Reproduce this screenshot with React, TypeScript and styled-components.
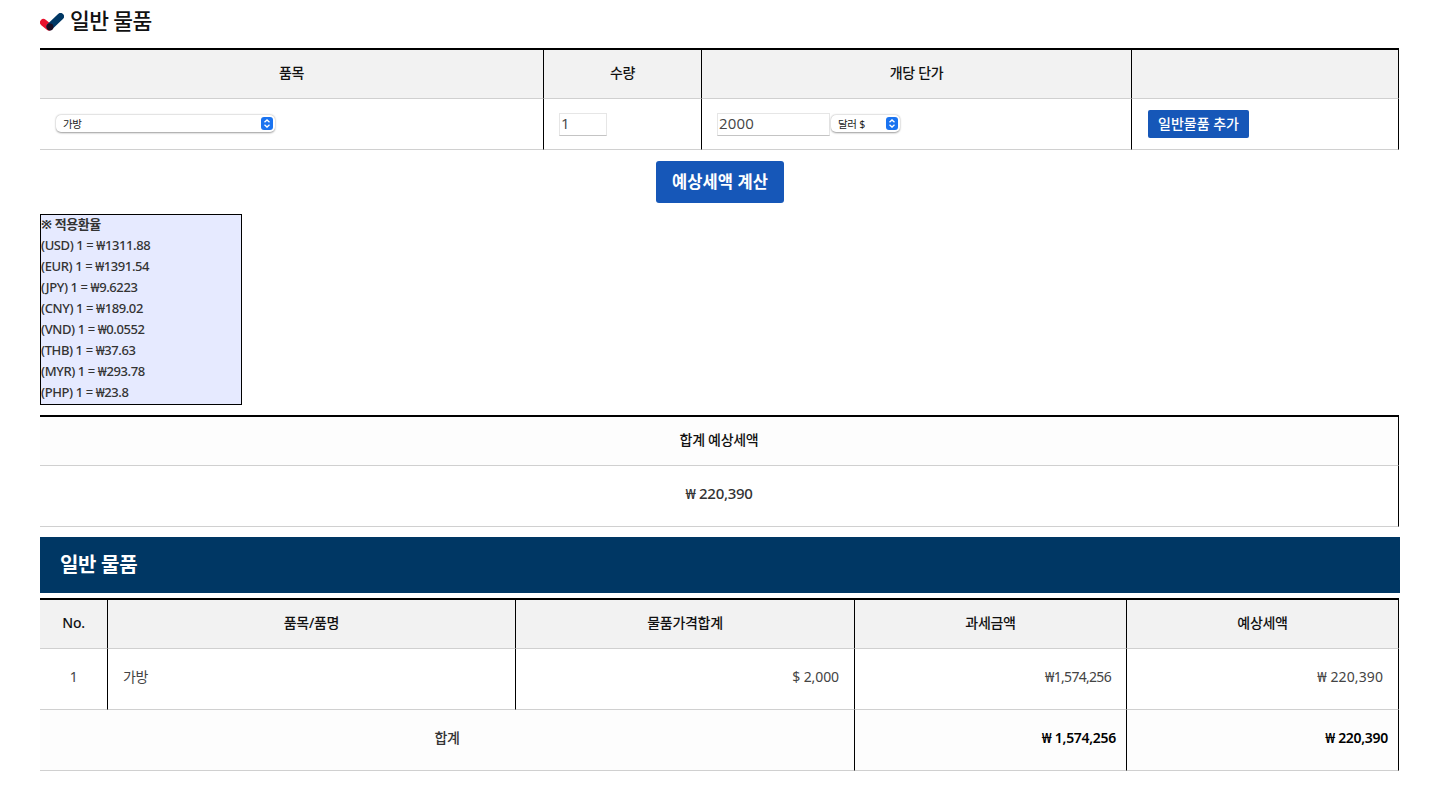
import React from "react";
import styled, { createGlobalStyle } from "styled-components";

const Global = createGlobalStyle`
  html, body { margin: 0; padding: 0; background: #fff; }
  body { font-family: "Noto Sans", "Noto Sans CJK KR", sans-serif; color: #333; letter-spacing: -0.3px; }
`;

const Page = styled.div`
  width: 1360px;
  margin: 0 40px;
  padding-bottom: 35px;
`;

const Heading = styled.h3`
  display: flex;
  align-items: center;
  gap: 6px;
  height: 48px;
  margin: 0;
  padding-bottom: 4px;
  box-sizing: border-box;
  font-size: 21.5px;
  line-height: 26px;
  font-weight: 500;
  color: #111;
  letter-spacing: -0.6px;
`;

const HeadingText = styled.span`
  padding-bottom: 3px;
`;

const Table = styled.table`
  width: 1359px;
  table-layout: fixed;
  border-collapse: separate;
  border-spacing: 0;
  border-top: 2px solid #000;
`;

const Th = styled.th<{ $tint?: boolean }>`
  height: 44px;
  padding: 0 0 4px;
  box-sizing: content-box;
  background: ${(p) => (p.$tint ? "#fdfdfd" : "#f2f2f2")};
  border-bottom: 1px solid #d0d0d0;
  border-right: 1px solid #000;
  font-size: 14px;
  font-weight: 500;
  color: #111;
  text-align: center;
`;

const Td = styled.td<{ $align?: string; $bold?: boolean; $mid?: boolean; $tint?: boolean; $fs?: number; $ls?: number }>`
  height: 54px;
  padding: 0 15px 6px;
  box-sizing: content-box;
  background: ${(p) => (p.$tint ? "#fdfdfd" : "#fff")};
  border-bottom: 1px solid #d0d0d0;
  border-right: 1px solid #000;
  font-size: ${(p) => p.$fs ?? 14}px;
  font-weight: ${(p) => (p.$bold ? 600 : p.$mid ? 500 : 400)};
  color: ${(p) => (p.$bold ? "#000" : p.$mid ? "#333" : "#444")};
  text-align: ${(p) => p.$align ?? "left"};
  letter-spacing: ${(p) => p.$ls ?? -0.3}px;
  white-space: nowrap;
`;

const FormTd = styled(Td)<{ $pl?: number }>`
  height: 50px;
  padding: 0 ${(p) => p.$pl ?? 15}px;
`;

const Controls = styled.div`
  display: flex;
  align-items: center;
  gap: 1px;
`;

const SelectBox = styled.div<{ $w: number }>`
  width: ${(p) => p.$w}px;
  height: 17px;
  margin-bottom: 1px;
  box-sizing: border-box;
  display: flex;
  align-items: center;
  justify-content: space-between;
  padding: 0 2px 0 7px;
  background: #fff;
  border-radius: 5px;
  box-shadow: 0 0.5px 2px rgba(0, 0, 0, 0.4);
  font-size: 10.5px;
  color: #222;
`;

const Stepper = styled.span`
  width: 12px;
  height: 13px;
  display: flex;
  align-items: center;
  justify-content: center;
  background: #1a73f0;
  border-radius: 3px;
`;

const Input = styled.div<{ $w: number }>`
  width: ${(p) => p.$w}px;
  height: 23px;
  box-sizing: border-box;
  padding: 0 0 2px 1px;
  display: flex;
  align-items: center;
  border: 1px solid #e6e6e6;
  border-bottom-color: #c4c4c4;
  font-family: "Open Sans", "Noto Sans", sans-serif;
  font-size: 15px;
  letter-spacing: 0.2px;
  color: #444;
`;

const AddButton = styled.button`
  width: 101px;
  height: 28px;
  padding: 0 0 2px;
  border: none;
  border-radius: 2px;
  background: #1657b8;
  color: #fff;
  font-family: inherit;
  font-size: 14px;
  font-weight: 500;
  letter-spacing: 0;
`;

const CalcRow = styled.div`
  display: flex;
  justify-content: center;
  padding: 11px 0;
`;

const CalcButton = styled.button`
  width: 128px;
  height: 42px;
  padding: 0 0 3px;
  border: none;
  border-radius: 3px;
  background: #1657b8;
  color: #fff;
  font-family: inherit;
  font-size: 16.5px;
  font-weight: 700;
  letter-spacing: 0.1px;
`;

const Rates = styled.div`
  width: 202px;
  box-sizing: border-box;
  background: #e6eaff;
  border: 1px solid #000;
  font-size: 13px;
  font-weight: 500;
  color: #333;
  letter-spacing: -0.4px;
  margin-bottom: 10px;
`;

const RateLine = styled.div<{ $title?: boolean }>`
  height: 21px;
  line-height: 19px;
  white-space: nowrap;
  font-weight: ${(p) => (p.$title ? 700 : 500)};
`;

const Banner = styled.div`
  width: 1360px;
  height: 56px;
  margin: 10px 0 5px;
  padding: 0 20px 4px;
  box-sizing: border-box;
  display: flex;
  align-items: center;
  background: #003764;
  color: #fff;
  font-size: 20px;
  font-weight: 600;
`;

const Total = styled(Td)`
  padding: 0 10px 6px 0;
`;

const CheckIcon = () => (
  <svg width="24" height="18" viewBox="0 0 24 18">
    <path d="M3.5 9.5 L9 14" stroke="#e8112d" strokeWidth="7" strokeLinecap="round" fill="none" />
    <path d="M10 13.5 L20.5 3.5" stroke="#003764" strokeWidth="7" strokeLinecap="round" fill="none" />
    <circle cx="10" cy="14" r="3.4" fill="#1a0d22" />
  </svg>
);

const Arrows = () => (
  <svg width="8" height="9" viewBox="0 0 8 9" fill="none" stroke="#fff" strokeWidth="1.3">
    <path d="M1.5 3.3 L4 1 L6.5 3.3" />
    <path d="M1.5 5.7 L4 8 L6.5 5.7" />
  </svg>
);

const rates = [
  "(USD) 1 = ₩1311.88",
  "(EUR) 1 = ₩1391.54",
  "(JPY) 1 = ₩9.6223",
  "(CNY) 1 = ₩189.02",
  "(VND) 1 = ₩0.0552",
  "(THB) 1 = ₩37.63",
  "(MYR) 1 = ₩293.78",
  "(PHP) 1 = ₩23.8",
];

export default function App() {
  return (
    <Page>
      <Global />
      <Heading>
        <CheckIcon />
        <HeadingText>일반 물품</HeadingText>
      </Heading>

      <Table>
        <colgroup>
          <col style={{ width: 504 }} />
          <col style={{ width: 158 }} />
          <col style={{ width: 430 }} />
          <col />
        </colgroup>
        <thead>
          <tr>
            <Th>품목</Th>
            <Th>수량</Th>
            <Th>개당 단가</Th>
            <Th />
          </tr>
        </thead>
        <tbody>
          <tr>
            <FormTd $pl={16}>
              <SelectBox $w={219}>
                가방
                <Stepper><Arrows /></Stepper>
              </SelectBox>
            </FormTd>
            <FormTd>
              <Input $w={48}>1</Input>
            </FormTd>
            <FormTd>
              <Controls>
                <Input $w={113}>2000</Input>
                <SelectBox $w={69}>
                  달러 $
                  <Stepper><Arrows /></Stepper>
                </SelectBox>
              </Controls>
            </FormTd>
            <FormTd $pl={16}>
              <AddButton>일반물품 추가</AddButton>
            </FormTd>
          </tr>
        </tbody>
      </Table>

      <CalcRow>
        <CalcButton>예상세액 계산</CalcButton>
      </CalcRow>

      <Rates>
        <RateLine $title>※ 적용환율</RateLine>
        {rates.map((r) => (
          <RateLine key={r}>{r}</RateLine>
        ))}
      </Rates>

      <Table>
        <thead>
          <tr>
            <Th $tint>합계 예상세액</Th>
          </tr>
        </thead>
        <tbody>
          <tr>
            <Td $align="center" $mid $fs={15}>₩ 220,390</Td>
          </tr>
        </tbody>
      </Table>

      <Banner>일반 물품</Banner>

      <Table>
        <colgroup>
          <col style={{ width: 68 }} />
          <col style={{ width: 408 }} />
          <col style={{ width: 339 }} />
          <col style={{ width: 272 }} />
          <col />
        </colgroup>
        <thead>
          <tr>
            <Th>No.</Th>
            <Th>품목/품명</Th>
            <Th>물품가격합계</Th>
            <Th>과세금액</Th>
            <Th>예상세액</Th>
          </tr>
        </thead>
        <tbody>
          <tr>
            <Td $align="center">1</Td>
            <Td>가방</Td>
            <Td $align="right" $ls={-0.1}>$ 2,000</Td>
            <Td $align="right" $ls={-0.7}>₩1,574,256</Td>
            <Td $align="right" $ls={0.1}>₩ 220,390</Td>
          </tr>
          <tr>
            <Td colSpan={3} $align="center" $tint $mid>합계</Td>
            <Total $align="right" $bold $tint>₩ 1,574,256</Total>
            <Total $align="right" $bold $tint>₩ 220,390</Total>
          </tr>
        </tbody>
      </Table>
    </Page>
  );
}
